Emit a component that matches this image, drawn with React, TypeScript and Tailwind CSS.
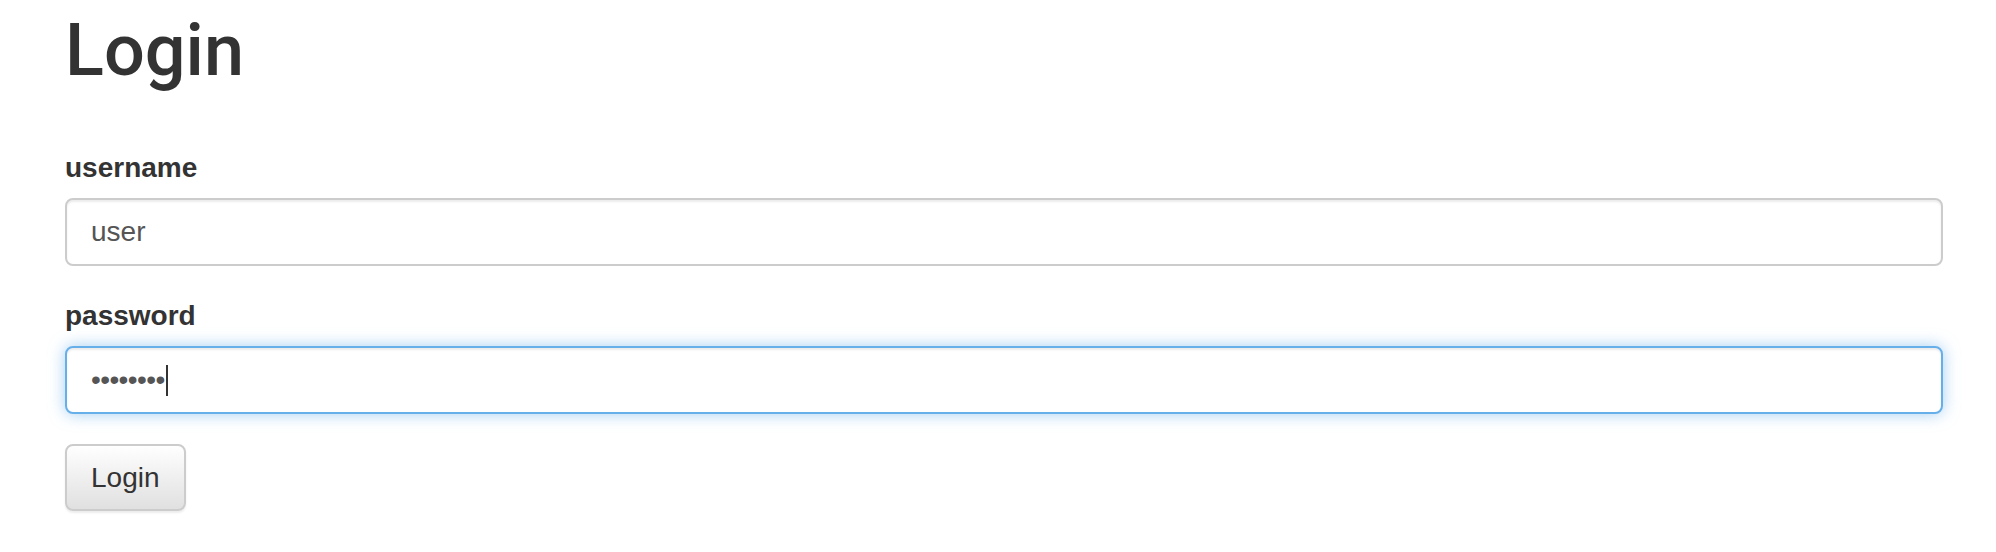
import React from "react";

export default function App() {
  return (
    <div
      className="w-[1996px] h-[552px] bg-white pl-[65px] pr-[53px] pt-[11px] text-[#333]"
      style={{ fontFamily: '"Liberation Sans", Arial, sans-serif' }}
    >
      <h1
        className="text-[72px] leading-[79px] font-medium text-[#333] m-0"
        style={{ fontFamily: 'Roboto, "Liberation Sans", sans-serif' }}
      >
        Login
      </h1>
      <form className="mt-[58px]" onSubmit={(e) => e.preventDefault()}>
        <div className="mb-[30px]">
          <label className="block text-[28px] leading-[40px] font-bold mb-[10px]">username</label>
          <input
            type="text"
            readOnly
            value="user"
            className="block w-full h-[68px] border-2 border-[#ccc] rounded-[8px] px-[24px] text-[28px] text-[#555] bg-white outline-none shadow-[inset_0_2px_2px_rgba(0,0,0,0.075)]"
            style={{ fontFamily: '"Liberation Sans", Arial, sans-serif' }}
          />
        </div>
        <div className="mb-[30px]">
          <label className="block text-[28px] leading-[40px] font-bold mb-[10px]">password</label>
          <div className="flex items-center w-full h-[68px] border-2 border-[#66afe9] rounded-[8px] px-[24px] text-[28px] text-[#555] bg-white shadow-[inset_0_2px_2px_rgba(0,0,0,0.075),0_0_16px_rgba(102,175,233,0.6)]">
            <span className="tracking-[-0.6px] leading-none">••••••••</span>
            <span className="inline-block w-[2px] h-[31px] bg-[#333] ml-[1px]" />
          </div>
        </div>
        <button
          type="submit"
          className="h-[67px] px-[24px] border-2 border-[#ccc] rounded-[8px] text-[28px] text-[#333] bg-gradient-to-b from-white to-[#e0e0e0] shadow-[0_2px_2px_rgba(0,0,0,0.075)]"
          style={{ fontFamily: '"Liberation Sans", Arial, sans-serif' }}
        >
          Login
        </button>
      </form>
    </div>
  );
}
